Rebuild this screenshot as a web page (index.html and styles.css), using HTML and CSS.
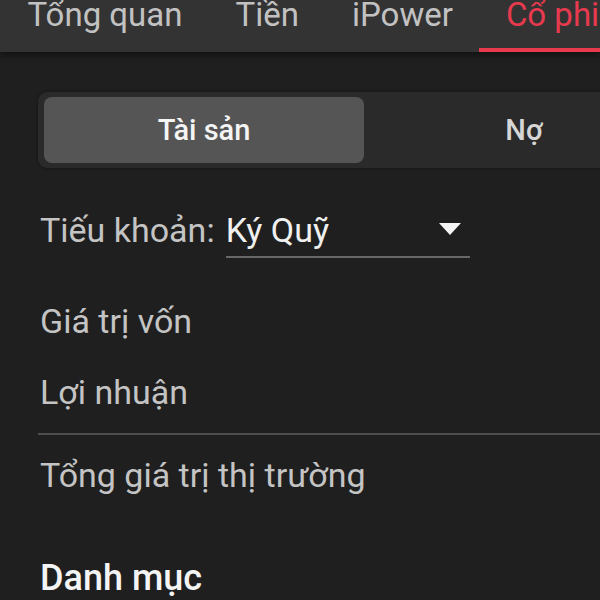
FILE: index.html
```html
<!DOCTYPE html>
<html lang="vi">
<head>
	<meta charset="utf-8">
	<title>Tài sản</title>
	<link rel="stylesheet" href="styles.css">
</head>
<body>

	<div class="tabs">
		<span class="tab">Tổng quan</span>
		<span class="tab">Tiền</span>
		<span class="tab">iPower</span>
		<span class="tab active">Cổ phiếu</span>
	</div>

	<div class="content">
		<div class="segment">
			<div class="seg-btn selected">Tài sản</div>
			<div class="seg-btn">Nợ</div>
		</div>

		<div class="account">
			<span class="account-label">Tiếu khoản:</span>
			<div class="select">
				<span class="select-value">Ký Quỹ</span>
				<span class="caret"></span>
			</div>
		</div>

		<div class="row first">Giá trị vốn</div>
		<div class="row">Lợi nhuận</div>
		<div class="divider"></div>
		<div class="row total">Tổng giá trị thị trường</div>

		<div class="section-title">Danh mục</div>
	</div>

</body>
</html>
```

FILE: styles.css
```css
html, body {
	margin: 0;
	padding: 0;
	overflow: hidden;
}

body {
	background: #1f1f1f;
	font-family: Roboto, "Noto Sans", sans-serif;
	color: #c4c4c4;
}

.tabs {
	display: flex;
	height: 52px;
	padding-left: 1px;
	background: #333333;
	white-space: nowrap;
	box-shadow: 0 3px 6px rgba(0, 0, 0, 0.45);
	position: relative;
	z-index: 2;
}

.tab {
	box-sizing: border-box;
	height: 52px;
	padding: 0 26.5px;
	font-size: 33px;
	line-height: 30px;
	color: #c2c2c2;
	flex-shrink: 0;
}

.tab.active {
	color: #e83a4e;
	border-bottom: 4px solid #e83a4e;
}

.content {
	width: 652px;
	padding: 40px 0 0 38px;
}

.segment {
	display: flex;
	height: 76px;
	box-sizing: border-box;
	padding: 5px 6px;
	background: #2a2a2a;
	border-radius: 9px;
	box-shadow: 0 0 3px rgba(0, 0, 0, 0.5);
}

.seg-btn {
	flex: 1;
	display: flex;
	align-items: center;
	justify-content: center;
	font-size: 29px;
	font-weight: 500;
	color: #d6d6d6;
	border-radius: 8px;
}

.seg-btn.selected {
	background: #555555;
	color: #f4f4f4;
}

.account {
	display: flex;
	align-items: flex-start;
	margin-top: 40px;
}

.account-label {
	font-size: 34px;
	line-height: 44px;
	padding-left: 2px;
}

.select {
	display: flex;
	align-items: center;
	justify-content: space-between;
	width: 244px;
	height: 44px;
	padding-bottom: 4px;
	margin-left: 11px;
	border-bottom: 2px solid #676767;
}

.select-value {
	font-size: 34px;
	line-height: 44px;
	color: #f0f0f0;
}

.caret {
	width: 0;
	height: 0;
	margin-right: 9px;
	margin-top: -2px;
	border-left: 11.5px solid transparent;
	border-right: 11.5px solid transparent;
	border-top: 12px solid #f4f4f4;
}

.row {
	font-size: 34px;
	line-height: 44px;
	padding-left: 2px;
	margin-top: 27px;
}

.row.first {
	margin-top: 41px;
}

.divider {
	height: 2px;
	margin-top: 19px;
	background: #4e4e4e;
}

.row.total {
	margin-top: 18px;
}

.section-title {
	font-size: 36px;
	font-weight: 500;
	line-height: 44px;
	color: #f4f4f4;
	padding-left: 2px;
	margin-top: 59px;
}
```
